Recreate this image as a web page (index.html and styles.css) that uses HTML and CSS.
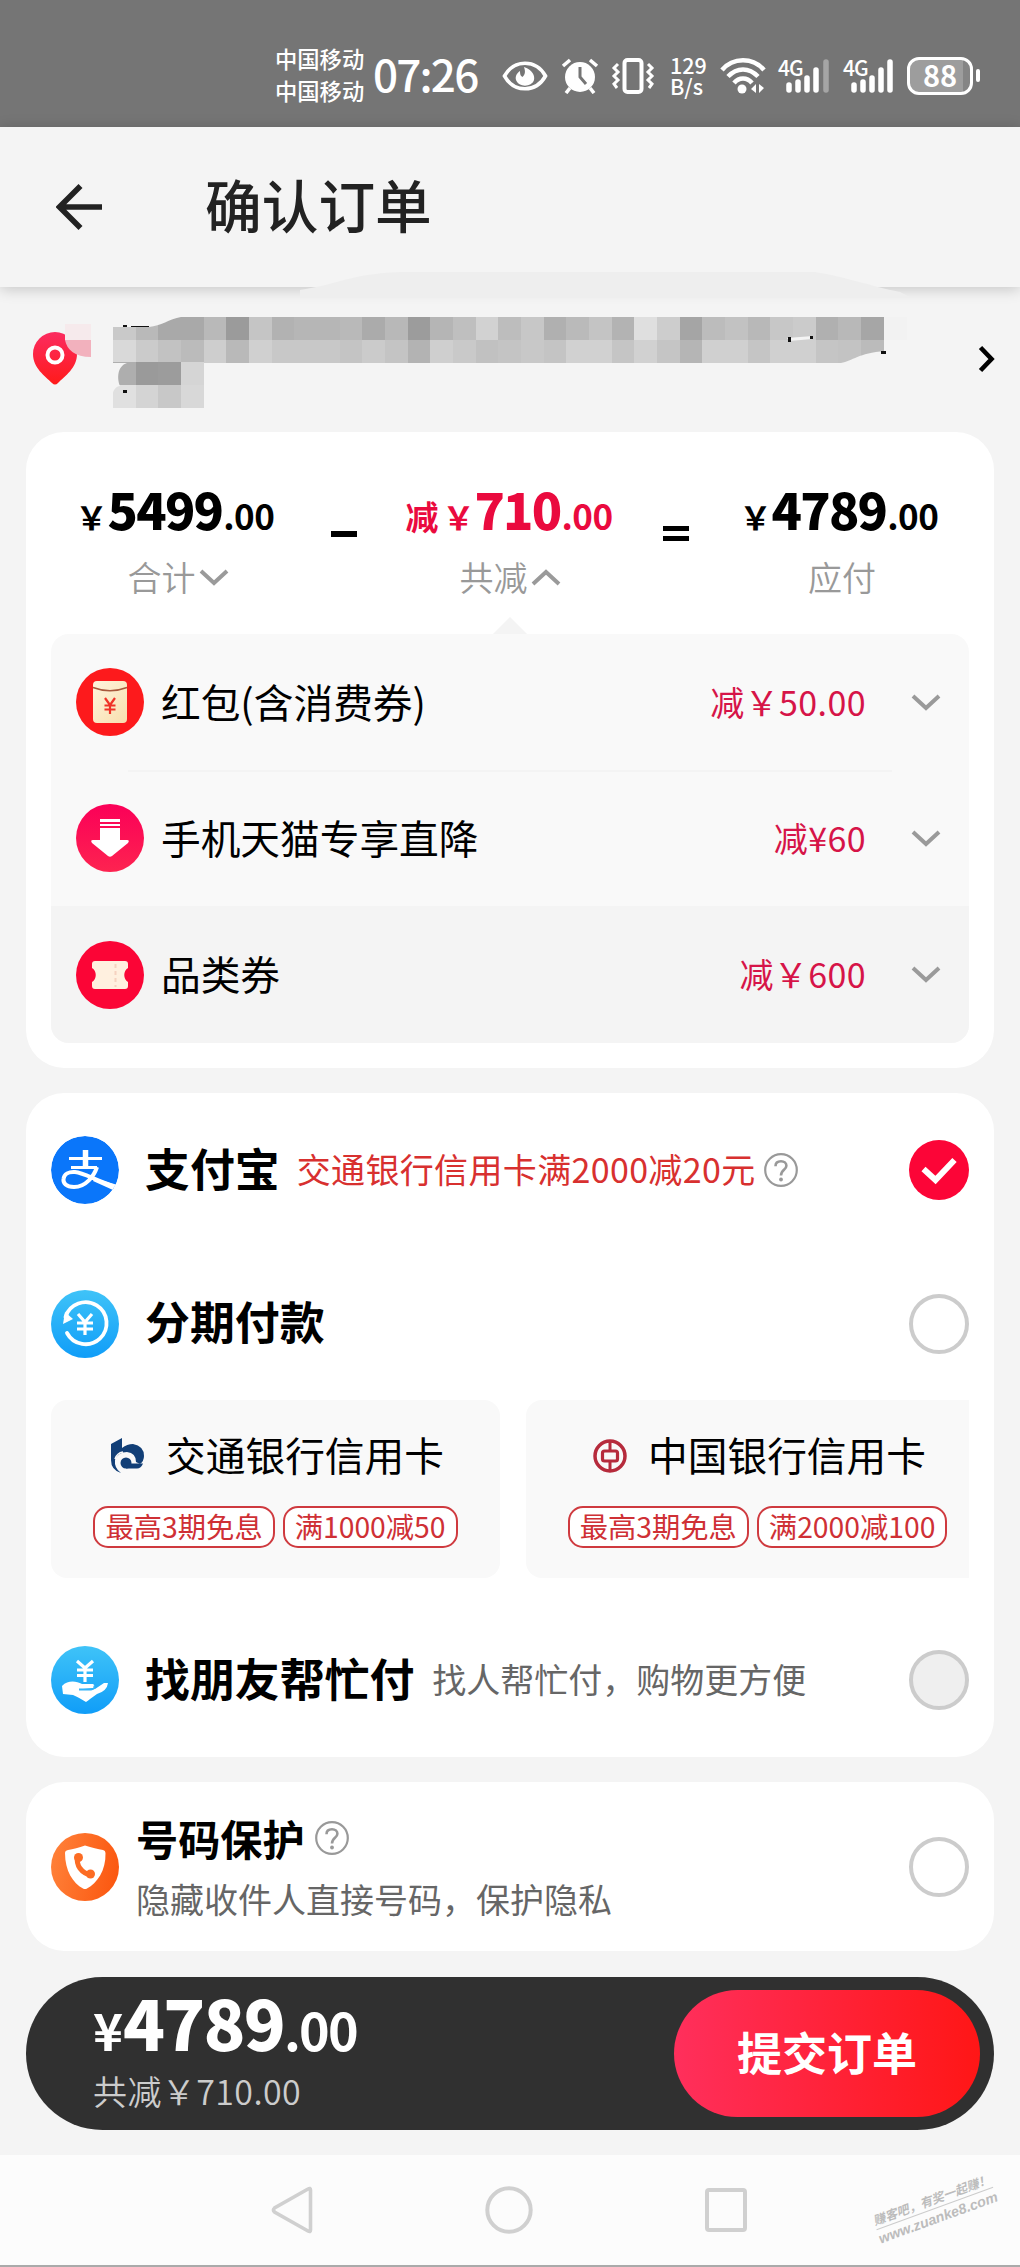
FILE: index.html
```html
<!DOCTYPE html>
<html lang="zh-CN">
<head>
<meta charset="utf-8">
<title>确认订单</title>
<link rel="stylesheet" href="styles.css">
</head>
<body>
<svg class="defs" width="0" height="0" aria-hidden="true">
  <defs>
    <linearGradient id="blue" x1="0" y1="0" x2="0" y2="1"><stop offset="0" stop-color="#3fc3f8"/><stop offset="1" stop-color="#109df8"/></linearGradient>
    <linearGradient id="orange" x1="0" y1="0.4" x2="1" y2="0.6"><stop offset="0" stop-color="#ff8038"/><stop offset="1" stop-color="#fb5710"/></linearGradient>
    <linearGradient id="pink" x1="0" y1="0" x2="0" y2="1"><stop offset="0" stop-color="#fb0058"/><stop offset="1" stop-color="#fd2350"/></linearGradient>
    <linearGradient id="pin" x1="0" y1="0" x2="0" y2="1"><stop offset="0" stop-color="#fb2c60"/><stop offset="1" stop-color="#ff1a1a"/></linearGradient>
    <linearGradient id="cream" x1="0" y1="0" x2="1" y2="1"><stop offset="0" stop-color="#fff4dc"/><stop offset="1" stop-color="#f8dfae"/></linearGradient>
    <symbol id="down" viewBox="0 0 30 17"><path d="M2 2L15 14L28 2" fill="none" stroke="#9a9a9a" stroke-width="4"/></symbol>
    <symbol id="help" viewBox="0 0 34 34"><circle cx="17" cy="17" r="15.8" fill="none" stroke="#999" stroke-width="2.2"/><path d="M11.500 13.200C11.500 9.800 13.800 8.200 17 8.200C20.200 8.200 22.400 10 22.400 12.800C22.400 17 17 16.800 17 22.500" fill="none" stroke="#999" stroke-width="2.600"/><circle cx="17" cy="26.500" r="1.900" fill="#999"/></symbol>
  </defs>
</svg>

<div class="status">
  <div class="carriers"><span>中国移动</span><span>中国移动</span></div>
  <div class="clock">07:26</div>
  <svg class="s-eye" width="46" height="32" viewBox="0 0 46 32"><path d="M2.500 16C12-1 34-1 43.500 16C34 33 12 33 2.500 16Z" fill="none" stroke="#fff" stroke-width="3.600"/><path d="M22 7C31 10 33 16 32 20C30 27 17 28 14 20C13 16 15 13 18 11C18 15 19 16 20.500 17C24 14 23 10 22 7Z" fill="#fff"/></svg>
  <svg class="s-alarm" width="38" height="36" viewBox="0 0 38 36"><circle cx="19" cy="19" r="15" fill="#fff"/><path d="M2 8L9 2M36 8L29 2M9 30L5 35M29 30L33 35" stroke="#fff" stroke-width="3.600"/><path d="M19 9V19L25 26" fill="none" stroke="#757575" stroke-width="3"/></svg>
  <svg class="s-vib" width="44" height="36" viewBox="0 0 44 36"><rect x="13.500" y="2" width="17" height="32" rx="3" fill="none" stroke="#fff" stroke-width="4"/><path d="M7 6L3 10L7 14L3 18L7 22L3 26L6 30M37 6L41 10L37 14L41 18L37 22L41 26L38 30" fill="none" stroke="#fff" stroke-width="3"/></svg>
  <div class="speed">129<br>B/s</div>
  <svg class="s-wifi" width="46" height="36" viewBox="0 0 46 36"><g fill="none" stroke="#fff" stroke-width="4.500"><path d="M2 12C13-1 33-1 44 12"/><path d="M8 18.500C17 9 29 9 38 18.500"/><path d="M14 25C19 19 27 19 32 25"/></g><circle cx="22" cy="31" r="4.500" fill="#fff"/><path d="M36 26V35L31 31ZM39 26V35L44 30Z" fill="#fff"/></svg>
  <div class="signal"><span class="net">4G</span><svg width="52" height="36" viewBox="0 0 52 36"><g stroke="#fff" stroke-width="5.500" stroke-linecap="round"><path d="M11 27V32M20 24V32M29 20V32M38 12V32"/><path d="M48 4V32" opacity=".35"/></g></svg></div>
  <div class="signal second"><span class="net">4G</span><svg width="52" height="36" viewBox="0 0 52 36"><g stroke="#fff" stroke-width="5.500" stroke-linecap="round"><path d="M11 27V32M20 24V32M29 20V32M38 12V32M47 4V32"/></g></svg></div>
  <div class="battery"><span>88</span></div><i class="nub"></i>
</div>

<header class="header">
  <svg width="46" height="46" viewBox="0 0 46 46"><path d="M24.500 2L3.500 23L24.500 44M3.500 23H46" fill="none" stroke="#222" stroke-width="5.600"/></svg>
  <h1>确认订单</h1>
  <svg class="haze" width="610" height="40" viewBox="0 0 610 40"><path d="M0 26C40 20 50 10 100 8H515C550 14 570 22 600 28L610 33H0Z" fill="#eeeeee"/></svg>
</header>

<section class="address">
  <svg class="pin" width="58" height="66" viewBox="0 0 58 66"><path d="M22 8A22 22 0 0 1 44 30C44 44 32 52 25 59Q22 62 19 59C12 52 0 44 0 30A22 22 0 0 1 22 8Z" fill="url(#pin)"/><circle cx="22" cy="31" r="7.500" fill="none" stroke="#fff" stroke-width="4"/><path d="M32 0H58V16H32Z" fill="#f6eaec"/><path d="M32 16H58V33C42 33 34 26 32 16Z" fill="#f2b1bd"/></svg>
  <svg id="mosaic" class="mosaic" width="820" height="96" viewBox="0 0 820 96" shape-rendering="crispEdges"></svg>
  <svg class="go" width="17" height="28" viewBox="0 0 17 28"><path d="M2.500 2.500L13.500 14L2.500 25.500" fill="none" stroke="#000" stroke-width="4.600"/></svg>
</section>

<main>
  <section class="card totals">
    <div class="sum">
      <div class="col"><p class="price"><span class="yen">￥</span><b>5499</b><span class="dec">.00</span></p><p class="cap">合计<svg width="30" height="17"><use href="#down"/></svg></p></div>
      <i class="op minus"></i>
      <div class="col"><p class="price red"><span class="tag-minus">减</span><span class="yen">￥</span><b>710</b><span class="dec">.00</span></p><p class="cap">共减<svg class="up" width="30" height="17"><use href="#down"/></svg></p></div>
      <i class="op equals"></i>
      <div class="col"><p class="price"><span class="yen">￥</span><b>4789</b><span class="dec">.00</span></p><p class="cap">应付</p></div>
    </div>
    <div class="discounts">
      <div class="drow">
        <svg width="68" height="68" viewBox="0 0 68 68"><circle cx="34" cy="34" r="34" fill="#fd1a1c"/><rect x="17" y="13" width="34" height="42" rx="4" fill="url(#cream)"/><path d="M17 19.500Q34 26 51 19.500" fill="none" stroke="#a8583c" stroke-width="1.500"/><path d="M29 30L34 37L39 30M34 37V46M28.500 37.500H39.500M28.500 41.500H39.500" fill="none" stroke="#ef3328" stroke-width="2.200"/></svg>
        <span class="dname">红包(含消费券)</span><span class="damt">减￥50.00</span><svg width="30" height="17"><use href="#down"/></svg>
      </div>
      <div class="drow">
        <svg width="68" height="68" viewBox="0 0 68 68"><circle cx="34" cy="34" r="34" fill="url(#pink)"/><path d="M24 15H44V18H24ZM24 20H44V22H24ZM24 24H44V36H51Q54 36 52 39L36 52Q34 53.500 32 52L16 39Q14 36 17 36H24Z" fill="#fff"/></svg>
        <span class="dname">手机天猫专享直降</span><span class="damt">减¥60</span><svg width="30" height="17"><use href="#down"/></svg>
      </div>
      <div class="drow last">
        <svg width="68" height="68" viewBox="0 0 68 68"><circle cx="34" cy="34" r="34" fill="#fb0536"/><path d="M19 20H49Q52 20 52 23V27C47 30 47 38 52 41V45Q52 48 49 48H19Q16 48 16 45V41C21 38 21 30 16 27V23Q16 20 19 20Z" fill="#fff0df"/><path d="M39.500 23V46" stroke="#f6d2c0" stroke-width="2" stroke-dasharray="4 3"/></svg>
        <span class="dname">品类券</span><span class="damt">减￥600</span><svg width="30" height="17"><use href="#down"/></svg>
      </div>
    </div>
  </section>

  <section class="card pay">
    <div class="prow alipay">
      <svg width="68" height="68" viewBox="0 0 68 68"><defs><clipPath id="disc"><circle cx="34" cy="34" r="34"/></clipPath></defs><g clip-path="url(#disc)"><circle cx="34" cy="34" r="34" fill="#0a76fa"/><path d="M18 22.500H51M20 31.500H46" stroke="#fff" stroke-width="3.200"/><path d="M34.500 14V31" stroke="#fff" stroke-width="5.500"/><path d="M46 31C43 40 35 51 23 51C15 51 12 47 12.500 43C13 38 18 35.500 24 36C34 37 45 45 66 51" fill="none" stroke="#fff" stroke-width="4"/><path d="M44 42L62 48V54L42 45Z" fill="#fff"/></g></svg>
      <b>支付宝</b><span class="promo">交通银行信用卡满2000减20元</span><svg class="q" width="34" height="34"><use href="#help"/></svg>
      <svg class="end" width="60" height="60" viewBox="0 0 60 60"><circle cx="30" cy="30" r="30" fill="#fc0537"/><path d="M14.500 29L26.500 40L45.500 20" fill="none" stroke="#fff" stroke-width="6"/></svg>
    </div>
    <div class="prow stage">
      <svg width="68" height="68" viewBox="0 0 68 68"><circle cx="34" cy="34" r="34" fill="url(#blue)"/><path d="M14.500 27A21 21 0 1 1 16 43" fill="none" stroke="#fff" stroke-width="3.800" stroke-linecap="round"/><path d="M14 22L12 34L22 29Z" fill="#fff"/><path d="M27 24L34 32L41 24M34 32V45M26 33H42M26 39H42" fill="none" stroke="#fff" stroke-width="3.200"/></svg>
      <b>分期付款</b><i class="radio end"></i>
    </div>
    <div class="banks">
      <div class="bank first">
        <div class="bname"><svg width="34" height="36" viewBox="0 0 34 36"><path d="M0 6L11 0V10Q16 6 22 6Q33 8 33 18Q33 23 29 26L25 24Q25 15 16 14Q7 14 4 22Q3 30 10 35Q0 32 0 22Z" fill="#123f77"/><path d="M4 21Q6 15 12 14" fill="none" stroke="#f9f9f9" stroke-width="1.500"/><circle cx="15" cy="25" r="5.500" fill="#123f77"/><path d="M15 25.500H32Q30 30.500 26 30.500H15Z" fill="#123f77"/></svg>交通银行信用卡</div>
        <div class="tags"><span>最高3期免息</span><span>满1000减50</span></div>
      </div>
      <div class="bank second">
        <div class="bname"><svg width="34" height="36" viewBox="0 0 34 36"><circle cx="17" cy="18" r="15" fill="none" stroke="#b62b3c" stroke-width="3.500"/><rect x="9.500" y="13" width="15" height="10" rx="2" fill="none" stroke="#b62b3c" stroke-width="3.200"/><path d="M17 3V13M17 23V33" stroke="#b62b3c" stroke-width="3"/></svg>中国银行信用卡</div>
        <div class="tags"><span>最高3期免息</span><span>满2000减100</span></div>
      </div>
    </div>
    <div class="prow friend">
      <svg width="68" height="68" viewBox="0 0 68 68"><circle cx="34" cy="34" r="34" fill="url(#blue)"/><path d="M26 15L34 22L42 15M34 22V36M26 24H42M26 29.500H42" fill="none" stroke="#fff" stroke-width="3.200"/><path d="M11 40C17 34 25 35 31 38H42Q45 40 42 42L32 43L44 43L53 37H57Q56 45 46 48Q39 53 35 56Q27 51 22 49L12 48Z" fill="#fff"/><path d="M28 43.500H40Q45 43 43 39.500" fill="none" stroke="#35b4f8" stroke-width="1.800"/></svg>
      <b>找朋友帮忙付</b><span class="note">找人帮忙付，购物更方便</span><i class="radio off end"></i>
    </div>
  </section>

  <section class="card guard">
    <svg width="68" height="68" viewBox="0 0 68 68"><circle cx="34" cy="34" r="34" fill="url(#orange)"/><path d="M34 12.500C41 15 47 16 52 17Q54.500 17.500 54.500 20C55 38 46 50 36 55.500Q34 56.500 32 55.500C22 50 14 38 14 20Q14 17.500 17 17C22 16 28 15 34 12.500Z" fill="#fff"/><path d="M26.500 24C25 32 30 40 40 42" fill="none" stroke="#fc6c24" stroke-width="5"/><circle cx="27.500" cy="24.500" r="4.500" fill="#fc6c24"/><circle cx="39.500" cy="41" r="4.500" fill="#fc6c24"/></svg>
    <div class="gtext"><div class="gtitle"><b>号码保护</b><svg width="34" height="34"><use href="#help"/></svg></div><p>隐藏收件人直接号码，保护隐私</p></div>
    <i class="radio end"></i>
  </section>
</main>

<div class="checkout">
  <div class="due"><p class="total"><span class="y">¥</span><b>4789</b><span class="d">.00</span></p><p class="saved">共减￥710.00</p></div>
  <button class="submit">提交订单</button>
</div>

<nav class="nav">
  <svg width="42" height="48" viewBox="0 0 42 48"><path d="M39.500 4V44Q39.500 46.500 37 45L3.500 26Q1.500 24 3.500 22L37 3Q39.500 1.500 39.500 4Z" fill="none" stroke="#d0d0d0" stroke-width="3.600"/></svg>
  <svg width="48" height="48" viewBox="0 0 48 48"><circle cx="24" cy="24" r="21.700" fill="none" stroke="#d0d0d0" stroke-width="4"/></svg>
  <svg width="42" height="44" viewBox="0 0 42 44"><rect x="2" y="2" width="38" height="40" rx="2" fill="none" stroke="#d0d0d0" stroke-width="4"/></svg>
  <div class="mark"><span class="m1">赚客吧，有奖一起赚！</span><span class="m2">www.zuanke8.com</span></div>
</nav>
<script src="mosaic.js"></script>
</body>
</html>
```
FILE: styles.css
```css
* { box-sizing: border-box; margin: 0; padding: 0; }
body {
  width: 1020px; height: 2267px; overflow: hidden;
  display: flex; flex-direction: column;
  background: #f4f4f4; color: #000;
  font-family: "Noto Sans CJK SC", sans-serif;
}
svg { display: block; flex: none; }
i { display: block; flex: none; }
.defs { position: absolute; }

.status { height: 127px; flex: none; background: #757575; color: #fff; display: flex; align-items: center; padding: 24px 0 0 275px; }
.carriers { width: 98px; display: flex; flex-direction: column; font-size: 22.300px; line-height: 32px; font-weight: 500; margin-top: -3px; }
.clock { width: 129px; font-size: 44px; line-height: 50px; letter-spacing: -1.800px; font-weight: 500; margin-top: -5px; white-space: nowrap; }
.s-eye { margin-right: 13px; }
.s-alarm { margin-right: 12px; }
.s-vib { margin-right: 15px; }
.speed { width: 50px; font-size: 21.500px; line-height: 21px; font-weight: 500; margin-top: -2px; }
.signal { position: relative; width: 52px; margin-left: 12px; }
.signal.second { margin-left: 13px; }
.net { position: absolute; left: 0; top: -3px; font-size: 21px; line-height: 24px; font-weight: 500; letter-spacing: -1px; }
.battery { width: 66px; height: 38px; margin-left: 12px; border: 3px solid #fff; border-radius: 12px; background: linear-gradient(90deg, #9d9d9d 88%, #858585 88%); text-align: center; font-size: 29px; line-height: 29px; font-weight: 700; }
.nub { width: 4px; height: 13px; margin-left: 3px; background: #fff; border-radius: 2px; }

.header { position: relative; height: 160px; flex: none; display: flex; align-items: center; padding-left: 56px; background: #f4f4f4; box-shadow: 0 2px 14px rgba(0, 0, 0, .2); }
.header h1 { margin: -8px 0 0 103px; font-size: 56.700px; font-weight: 500; line-height: 80px; color: #222; }
.haze { position: absolute; left: 300px; top: 137px; }

.address { height: 145px; flex: none; display: flex; padding: 30px 0 0 33px; }
.pin { margin-top: 7px; }
.mosaic { margin-left: 22px; }
.go { margin: 28px 0 0 45px; }

.card { margin: 0 26px 25px 26px; background: #fff; border-radius: 38px; }
.totals { height: 636px; padding: 58px 25px 0; }
.sum { display: grid; grid-template-columns: 1fr 28px 1fr 28px 1fr; height: 144px; margin: 0 -25px; }
.price { display: flex; justify-content: center; align-items: baseline; height: 60px; line-height: 60px; margin: -12px 2px 0 0; white-space: nowrap; font-weight: 700; }
.price b { font-size: 50px; letter-spacing: -1.800px; }
.price .dec { font-size: 35px; letter-spacing: -.5px; margin-left: 1px; }
.price .yen { font-size: 32px; width: 32px; font-weight: 700; margin-left: -4px; }
.price.red { color: #ea0a3e; }
.tag-minus { font-size: 33px; margin-right: 8px; }
.cap { display: flex; justify-content: center; align-items: center; gap: 3px; margin-top: 14px; height: 50px; line-height: 50px; font-size: 34px; color: #999; font-weight: 350; }
.up { transform: rotate(180deg); }
.op { width: 26px; margin-left: 1px; }
.minus { height: 6px; margin-top: 41px; background: #000; }
.equals { height: 15px; margin-top: 36px; border: solid #000; border-width: 5px 0; }
.discounts { position: relative; height: 409px; background: #f9f9f9; border-radius: 18px; }
.discounts::before { content: ""; position: absolute; left: 442px; top: -17px; border: solid transparent; border-width: 0 17px 17px; border-bottom-color: #f4f4f4; }
.drow { height: 136px; display: flex; align-items: center; padding: 0 28px 0 25px; }
.drow + .drow { background: linear-gradient(#f4f4f4, #f4f4f4) 77px 0 / 764px 2px no-repeat; }
.drow.last { height: 137px; background: #f4f4f4; border-radius: 0 0 18px 18px; }
.dname { margin: -3px auto 0 17px; font-size: 39.700px; line-height: 56px; }
.damt { margin: -1px 45px 0 0; font-size: 34px; line-height: 50px; letter-spacing: .4px; color: #d61448; }

.pay { height: 664px; padding: 0 25px; display: flex; flex-direction: column; }
.prow { display: flex; align-items: center; flex: none; height: 153px; }
.prow b { margin: -5px 0 0 26px; font-size: 44.900px; line-height: 64px; white-space: nowrap; }
.promo { margin: -3px 0 0 17px; font-size: 34px; letter-spacing: .35px; line-height: 50px; color: #d8302f; white-space: nowrap; }
.note { margin: -3px 0 0 18px; font-size: 34px; line-height: 50px; color: #666; white-space: nowrap; }
.q { margin-left: 8px; }
.end { margin-left: auto; }
.radio { width: 60px; height: 60px; border: 4px solid #ccc; border-radius: 50%; }
.radio.off { background: #efefef; }
.banks { display: flex; gap: 26px; height: 178px; flex: none; overflow: hidden; }
.bank { flex: none; height: 178px; background: #f9f9f9; border-radius: 16px; padding-top: 26px; }
.bank.first { width: 449px; }
.bank.second { width: 463px; }
.bname { display: flex; justify-content: center; align-items: center; gap: 21px; height: 56px; padding-left: 4px; line-height: 56px; font-size: 39.700px; }
.bname svg { margin-top: 3px; }
.tags { display: flex; justify-content: center; gap: 8px; margin-top: 24px; }
.tags span { height: 42px; padding: 0 10px; border: 2px solid #cf3a3f; border-radius: 15px; background: #fff; font-size: 28.300px; line-height: 35px; color: #cf3035; white-space: nowrap; }
.pay .alipay { height: 154px; }
.pay .friend { height: 178px; margin-top: 13px; }

.guard { display: flex; align-items: center; height: 169px; padding: 0 25px; }
.gtext { margin: 0 0 0 17px; }
.gtitle { display: flex; align-items: center; gap: 10px; height: 62px; }
.gtitle b { font-size: 42.200px; line-height: 60px; }
.gtitle svg { margin-top: 1px; }
.gtext p { margin-top: 2px; font-size: 34px; line-height: 56px; color: #666; }

.checkout { flex: none; display: flex; align-items: center; height: 153px; margin: 1px 26px 0; padding: 0 14px 0 67px; border-radius: 77px; background: #303030; color: #fff; }
.due { flex: 1; }
.total { display: flex; align-items: baseline; height: 84px; line-height: 84px; margin-top: -12px; font-weight: 700; }
.total b { font-size: 69px; letter-spacing: -1.800px; }
.total .y { font-size: 51px; }
.total .d { font-size: 52px; letter-spacing: -1.800px; }
.saved { margin-top: 3px; font-size: 34px; line-height: 50px; letter-spacing: .4px; color: #ccc; font-weight: 350; }
.submit { width: 306px; height: 127px; border: 0; border-radius: 64px; background: linear-gradient(90deg, #ff2f5c, #ff1616); color: #fff; font: 700 45px/64px "Noto Sans CJK SC", sans-serif; padding-bottom: 4px; }

.nav { position: relative; flex: none; height: 112px; margin-top: 25px; background: #fcfcfc; border-bottom: 2px solid #aaa; display: flex; align-items: center; justify-content: space-between; padding: 0 273px 0 271px; }
.mark { position: absolute; left: 865px; top: 35px; width: 140px; transform: rotate(-20deg); color: #bcbcbc; display: flex; flex-direction: column; align-items: center; }
.m1 { font-size: 12.400px; line-height: 18px; font-weight: 700; font-style: italic; border-bottom: 1px solid #ccc; white-space: nowrap; }
.m2 { font-family: "Liberation Sans", sans-serif; font-size: 14.200px; line-height: 19px; font-weight: 700; font-style: italic; }
```
FILE: mosaic.js
```js
// Grey levels of the pixelated delivery address, one list per row of tiles.
var rows = [
  'c9 b9 a9 a9 b9 9b c5 b2 b6 b6 b9 ab b8 9c b5 bf d2 bd c7 b0 ba c4 b3 df cd a5 bc c2 b8 c7 cb b0 b8 a6 f2',
  'd9 cb c2 bb ce b9 d0 c8 c8 c8 c4 cb c4 b3 cf c9 c1 c4 c8 c4 d1 d1 c5 d1 c5 b5 d0 d0 c5 d0 d0 c5 c3 bb',
  'ae 9a 9c d5',
  'e0 d4 c8 d8'
];
var size = 22.67;
var out = '';
rows.forEach(function (row, r) {
  row.split(' ').forEach(function (c, i) {
    out += '<rect x="' + i * size + '" y="' + r * size + '" width="23" height="23" fill="#' + c + c + c + '"/>';
  });
});
out += '<g shape-rendering="auto" fill="#f4f4f4"><path d="M0 0H68C56 2 48 9 36 10H0Z"/><path d="M0 68H14C4 71 4 84 7 91C3 91 0 96 0 98Z" transform="translate(0 -22)"/><path d="M772 50V34C745 36 740 44 728 46Z"/><path d="M674 21L700 19V22L676 24Z"/></g>';
out += '<g fill="#111"><rect x="10" y="8" width="4" height="2"/><rect x="18" y="9" width="18" height="1"/><rect x="10" y="73" width="4" height="3"/><rect x="675" y="20" width="3" height="5"/><rect x="697" y="19" width="3" height="3"/><rect x="768" y="34" width="5" height="3"/></g>';
document.getElementById('mosaic').innerHTML = out;
```
